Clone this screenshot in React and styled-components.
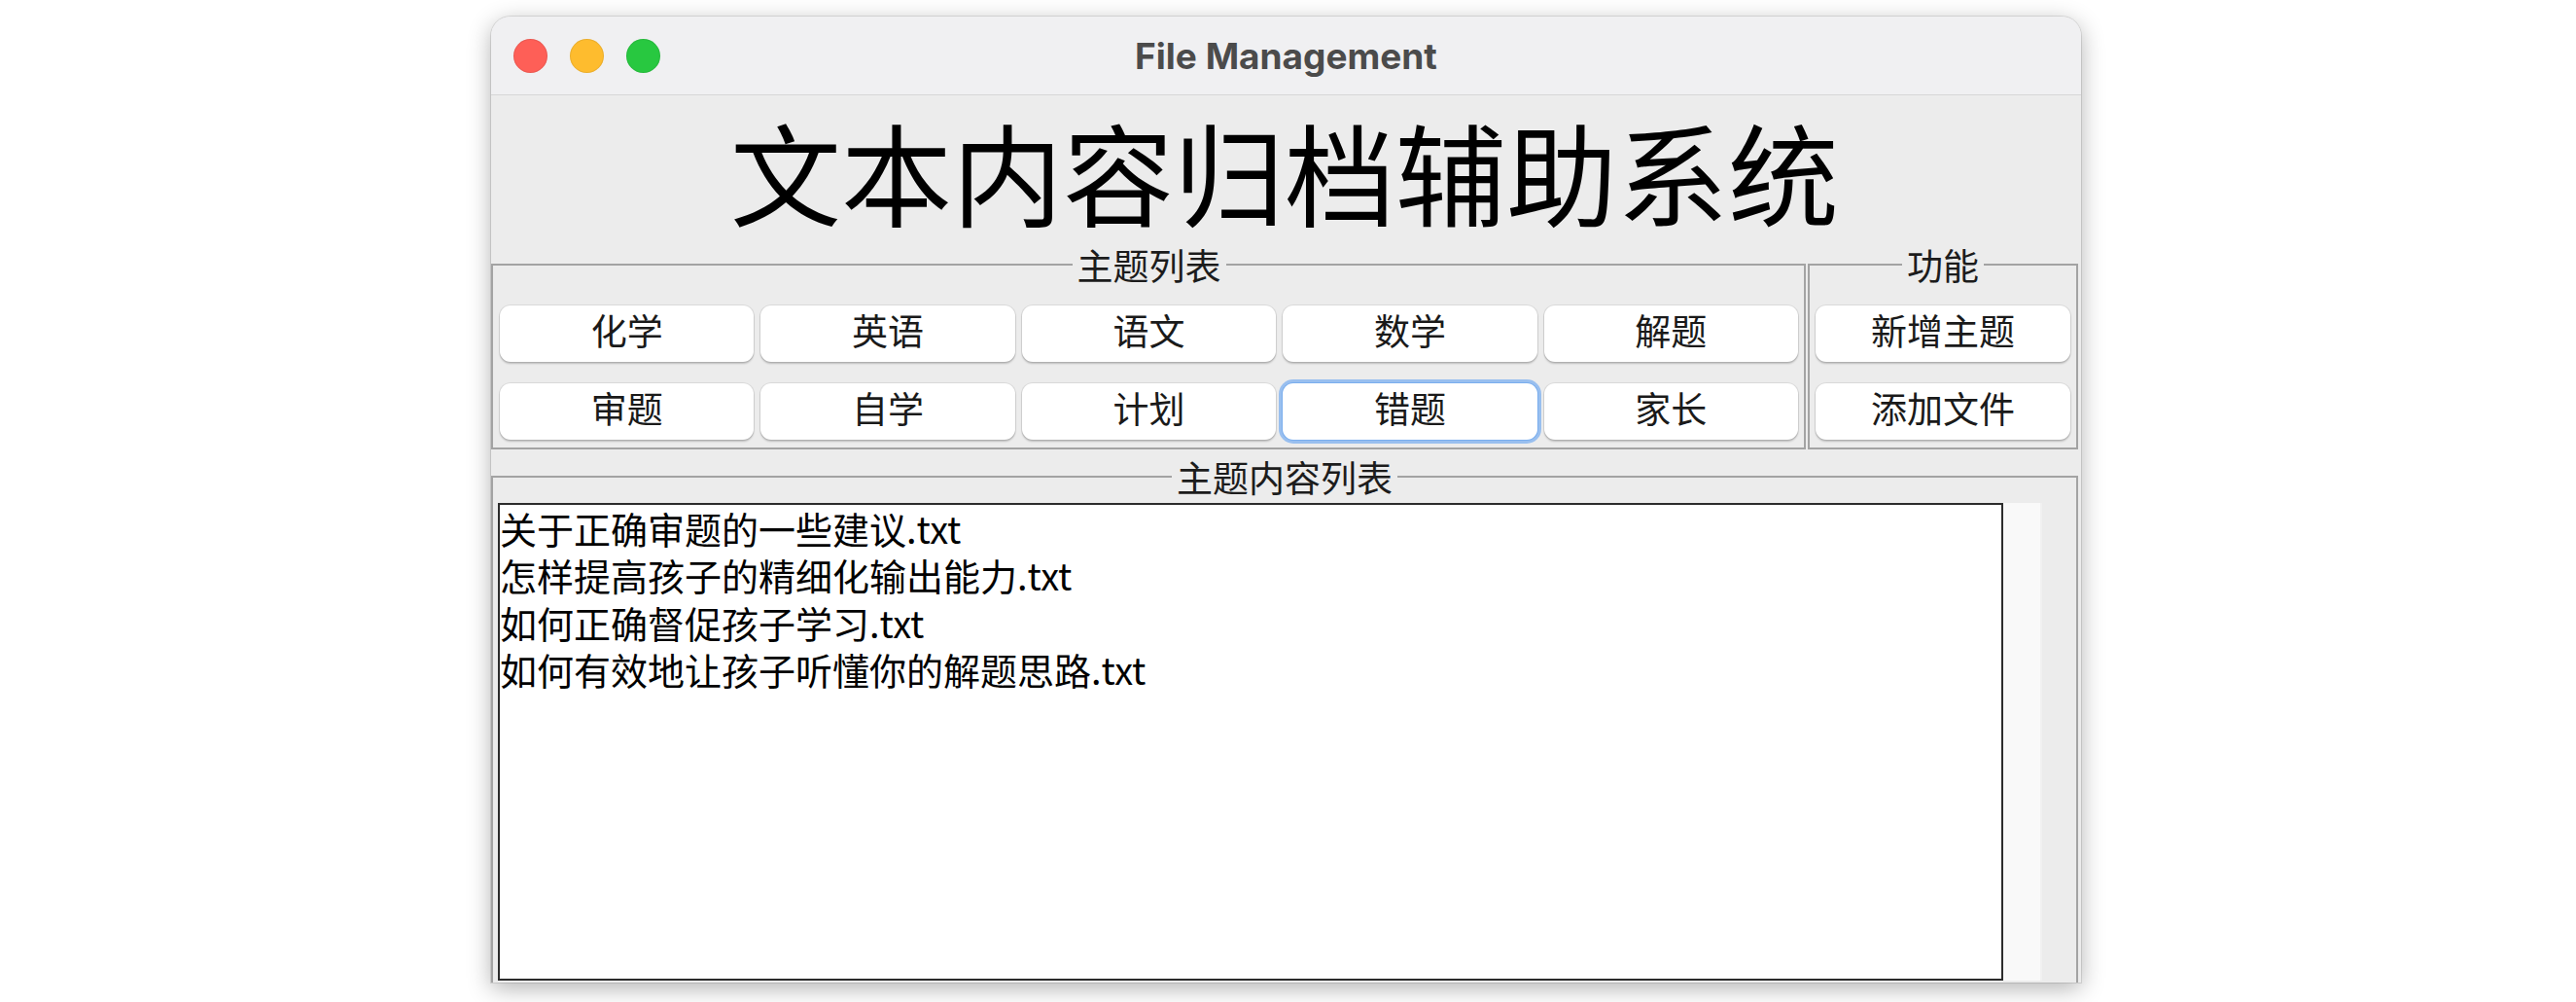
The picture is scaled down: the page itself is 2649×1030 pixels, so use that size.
import React from 'react';
import styled, { createGlobalStyle, css } from 'styled-components';

const GlobalStyle = createGlobalStyle`
  html, body { margin: 0; padding: 0; background: #ffffff; }
  body { font-family: "Noto Sans CJK SC", "Noto Sans", sans-serif; }
  * { box-sizing: border-box; }
`;

const Page = styled.div`
  width: 2649px;
  height: 1030px;
  overflow: hidden;
  padding: 17px 0 0 505px;
`;

const Window = styled.div`
  width: 1635px;
  height: 993px;
  border-radius: 20px 20px 0 0;
  overflow: hidden;
  background: #ececec;
  box-shadow: 0 0 0 1px rgba(0, 0, 0, 0.1), 0 6px 24px rgba(0, 0, 0, 0.3);
  display: flex;
  flex-direction: column;
`;

const TitleBar = styled.div`
  flex: none;
  height: 81px;
  display: grid;
  grid-template-columns: 1fr auto 1fr;
  align-items: center;
  background: #f0f0f2;
  border-bottom: 1px solid #d6d6d6;
`;

const Lights = styled.div`
  display: flex;
  gap: 23px;
  margin-left: 23px;
`;

const Light = styled.span`
  width: 35px;
  height: 35px;
  border-radius: 50%;
  background: ${(p) => p.$color};
  box-shadow: inset 0 0 0 1px rgba(0, 0, 0, 0.08);
`;

const WindowTitle = styled.div`
  font-family: "Inter", "Liberation Sans", sans-serif;
  font-weight: 700;
  font-size: 37px;
  color: #4b4b4b;
`;

const Content = styled.div`
  flex: 1;
  min-height: 0;
  display: flex;
  flex-direction: column;
  padding-right: 3px;
`;

const Heading = styled.h1`
  margin: 0;
  height: 154px;
  line-height: 154px;
  text-align: center;
  font-size: 114px;
  font-weight: 400;
  color: #000;
  font-family: "Noto Sans CJK SC", sans-serif;
`;

const TopRow = styled.div`
  display: flex;
  gap: 2px;
`;

const Group = styled.fieldset`
  margin: ${(p) => p.$margin || '0'};
  min-width: 0;
  border: 2px solid #a3a3a3;
  padding: ${(p) => p.$pad};
  width: ${(p) => p.$width || 'auto'};
  flex: ${(p) => (p.$grow ? '1' : 'none')};
`;

const Legend = styled.legend`
  margin: 0 auto;
  padding: 0 5px;
  font-size: 37px;
  line-height: 40px;
  color: #1c1c1c;
`;

const ButtonGrid = styled.div`
  display: grid;
  grid-template-columns: repeat(${(p) => p.$cols}, 1fr);
  grid-auto-rows: 58px;
  column-gap: 7px;
  row-gap: 22px;
`;

const Btn = styled.button`
  font-family: "Noto Sans CJK SC", sans-serif;
  font-size: 37px;
  color: #1a1a1a;
  background: #ffffff;
  border: none;
  border-radius: 11px;
  padding: 0 0 8px 0;
  display: flex;
  align-items: center;
  justify-content: center;
  box-shadow: 0 0 0 1px rgba(0, 0, 0, 0.08), 0 2px 2px rgba(0, 0, 0, 0.2);
  ${(p) =>
    p.$focused &&
    css`
      box-shadow: 0 0 0 1px #7aaeee, 0 0 0 4px rgba(133, 180, 240, 0.8);
    `}
`;

const ListRow = styled.div`
  display: flex;
  padding-right: 30px;
`;

const FileList = styled.ul`
  margin: 0;
  padding: 0;
  list-style: none;
  width: 1548px;
  height: 491px;
  border: 2px solid #2c2c2c;
  background: #ffffff;
`;

const FileItem = styled.li`
  font-size: 38px;
  line-height: 48.3px;
  color: #000;
  white-space: nowrap;
`;

const ScrollTrack = styled.div`
  width: 40px;
  height: 491px;
  background: #f9f9f9;
  border-right: 2px solid #f1f1f1;
`;

const topics = ['化学', '英语', '语文', '数学', '解题', '审题', '自学', '计划', '错题', '家长'];
const actions = ['新增主题', '添加文件'];
const files = [
  '关于正确审题的一些建议.txt',
  '怎样提高孩子的精细化输出能力.txt',
  '如何正确督促孩子学习.txt',
  '如何有效地让孩子听懂你的解题思路.txt',
];

export default function App() {
  return (
    <>
      <GlobalStyle />
      <Page>
        <Window>
          <TitleBar>
            <Lights>
              <Light $color="#fe5f57" />
              <Light $color="#febc2e" />
              <Light $color="#28c840" />
            </Lights>
            <WindowTitle>File Management</WindowTitle>
            <div />
          </TitleBar>
          <Content>
            <Heading>文本内容归档辅助系统</Heading>
            <TopRow>
              <Group $width="1352px" $pad="22px 6px 8px 7px">
                <Legend>主题列表</Legend>
                <ButtonGrid $cols={5}>
                  {topics.map((t) => (
                    <Btn key={t} $focused={t === '错题'}>
                      {t}
                    </Btn>
                  ))}
                </ButtonGrid>
              </Group>
              <Group $grow $pad="22px 6px 8px 6px">
                <Legend>功能</Legend>
                <ButtonGrid $cols={1}>
                  {actions.map((a) => (
                    <Btn key={a}>{a}</Btn>
                  ))}
                </ButtonGrid>
              </Group>
            </TopRow>
            <Group $margin="8px 0 0 0" $pad="7px 5px 20px 5px">
              <Legend>主题内容列表</Legend>
              <ListRow>
                <FileList>
                  {files.map((f) => (
                    <FileItem key={f}>{f}</FileItem>
                  ))}
                </FileList>
                <ScrollTrack />
              </ListRow>
            </Group>
          </Content>
        </Window>
      </Page>
    </>
  );
}
